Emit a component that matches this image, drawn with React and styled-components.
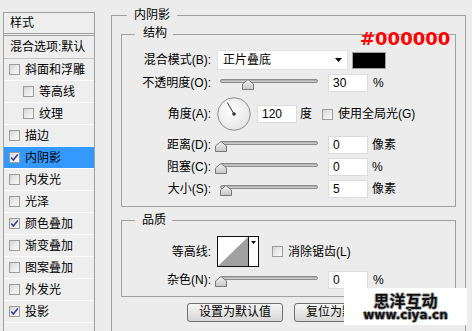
import React from 'react';
import styled, { createGlobalStyle } from 'styled-components';

const Global = createGlobalStyle`
  html, body { margin: 0; padding: 0; background: #ececec; }
  body {
    width: 472px; height: 331px; overflow: hidden;
    font-family: "Liberation Sans", "Noto Sans CJK SC", sans-serif;
    font-size: 12px; line-height: 14px; color: #000;
  }
`;

const Page = styled.div`
  position: relative;
  width: 472px; height: 331px; overflow: hidden;
  box-sizing: border-box;
  padding: 12px 0 0 3px;
  display: flex; align-items: flex-start;
`;

/* ---------- left style list ---------- */
const StylePanel = styled.div`
  flex-shrink: 0;
  width: 92px; height: 340px; box-sizing: border-box;
  border: 1px solid #a0a0a0;
  background: #eeeeee;
`;
const PanelHeader = styled.div`
  height: 20px; line-height: 20px; padding-left: 6px;
  border-bottom: 1px solid #a0a0a0;
`;
const StyleList = styled.div`
  margin-top: 1px;
  border-top: 1px solid #a0a0a0;
`;
const ListRow = styled.div`
  display: flex; align-items: center; gap: 5px;
  height: ${p => (p.$first ? 22 : 21)}px;
  padding-left: ${p => (p.$first ? 6 : p.$indent ? 19 : 5)}px;
  border-bottom: 1px solid ${p => (p.$first ? '#c4c4c4' : '#fbfbfb')};
  background: ${p => (p.$selected ? '#3399ff' : 'transparent')};
  white-space: nowrap;
`;

const BoxWrap = styled.span`
  flex-shrink: 0;
  display: inline-flex; align-items: center; justify-content: center;
  width: 11px; height: 11px; box-sizing: border-box;
  border: 1px solid #9c9c9c;
  background: linear-gradient(135deg, #d6d6d6 0%, #ececec 55%, #fafafa 100%);
  margin-left: ${p => p.$ml || 0}px;
`;
const Check = ({ checked, ml }) => (
  <BoxWrap $ml={ml}>
    {checked && (
      <svg width="9" height="9" viewBox="0 0 9 9">
        <path d="M1.2 4.6 L3.3 7 L7.8 1.5" fill="none" stroke="#2c3d8e" strokeWidth="1.5" />
      </svg>
    )}
  </BoxWrap>
);

/* ---------- right effect panel ---------- */
const Effect = styled.div`
  position: relative;
  flex-shrink: 0;
  margin: 3px 0 0 16px;
  width: 355px; height: 340px; box-sizing: border-box;
  border: 1px solid #a0a0a0; border-bottom: none;
  padding: 18px 9px 0 9px;
  display: flex; flex-direction: column;
`;
const Group = styled.div`
  position: relative;
  margin-top: ${p => p.$mt || 0}px;
  border: 1px solid #a0a0a0;
  padding: 15px 0 ${p => p.$pb}px 0;
  display: flex; flex-direction: column; gap: 4px;
`;
const Legend = styled.span`
  position: absolute;
  top: ${p => p.$top}px; left: ${p => p.$left}px;
  padding: 0 ${p => p.$pr}px 0 ${p => p.$pl}px;
  background: #ececec;
  line-height: 14px; white-space: nowrap;
`;
const Annotation = styled.span`
  position: absolute; top: -5px; left: 238px;
  font-family: "DejaVu Sans", sans-serif; font-weight: bold;
  font-size: 18px; line-height: 18px; color: #ff0000;
`;

const Row = styled.div`
  display: flex; align-items: center;
  height: ${p => p.$h}px;
`;
const Label = styled.span`
  flex-shrink: 0; width: 89px; text-align: right; white-space: nowrap;
`;
const Text = styled.span`
  margin-left: ${p => p.$ml || 0}px; white-space: nowrap;
`;

const Select = styled.div`
  margin-left: 6px;
  width: 131px; height: 20px; box-sizing: border-box;
  background: #fff; border: 1px solid #e2e2e2;
  display: flex; align-items: center;
  padding: 0 5px 0 5px;
`;
const SelectValue = styled.span`flex: 1;`;
const Swatch = styled.div`
  margin-left: 4px;
  width: 34px; height: 17px; box-sizing: border-box;
  border: 1px solid #a0a0a0; background: ${p => p.$color};
`;

const SliderBox = styled.div`
  position: relative; flex-shrink: 0;
  margin-left: 3px; width: 106px; height: 18px;
`;
const Track = styled.div`
  margin: 5px 2px 0 6px; height: 4px; box-sizing: border-box;
  border: 1px solid #8a8a8a; border-radius: 3px;
  background: linear-gradient(#a8a8a8, #d6d6d6);
`;
const Thumb = styled.svg`
  position: absolute; top: 5px;
`;
const Slider = ({ center }) => (
  <SliderBox>
    <Track />
    <Thumb width="12" height="11" viewBox="0 0 12 11" style={{ left: center - 6 - 214 }}>
      <defs>
        <linearGradient id="tg" x1="0" y1="0" x2="0" y2="1">
          <stop offset="0" stopColor="#f4f4f4" />
          <stop offset="1" stopColor="#c6c6c6" />
        </linearGradient>
      </defs>
      <polygon points="6,0.5 11.5,5 11.5,10.5 0.5,10.5 0.5,5" fill="url(#tg)" stroke="#777" />
    </Thumb>
  </SliderBox>
);

const NumBox = styled.div`
  margin-left: ${p => p.$ml}px;
  width: 40px; height: 18px; box-sizing: border-box;
  background: #fff; border: 1px solid #dcdcdc;
  padding-left: 4px; line-height: 16px;
`;

const Dial = styled.svg`margin-left: 6px; flex-shrink: 0;`;

const Contour = styled.div`
  margin-left: 6px;
  width: 42px; height: 31px; box-sizing: border-box;
  border: 1px solid #111; background: #fff;
  display: flex;
`;
const ContourArrow = styled.div`
  width: 9px; border-left: 1px solid #111;
  display: flex; justify-content: center; padding-top: 4px;
`;

const ButtonRow = styled.div`
  margin-top: 6px;
  display: flex; justify-content: center; gap: 11px;
`;
const Button = styled.div`
  width: 96px; height: 19px; box-sizing: border-box;
  border: 1px solid #707070; border-radius: 3px;
  background: linear-gradient(#f6f6f6, #e6e6e6 50%, #d6d6d6);
  text-align: center; line-height: 17px;
`;

const Watermark = styled.div`
  position: absolute; left: 344px; top: 288px;
  width: 123px; height: 37px; box-sizing: border-box;
  background: #fff; padding-top: 3px;
  display: flex; flex-direction: column; align-items: center;
`;
const WmTitle = styled.span`
  font-family: "Noto Sans CJK SC", sans-serif; font-weight: bold;
  font-size: 16px; line-height: 18px; color: #111;
  text-shadow: -1px 0 #aaa, 1px 0 #aaa, 0 -1px #aaa, 0 1px #aaa;
`;
const WmSub = styled.span`
  font-family: "DejaVu Sans", sans-serif; font-weight: bold;
  font-size: 12px; line-height: 13px; color: #111;
  text-shadow: -1px 0 #999, 1px 0 #999, 0 -1px #999, 0 1px #999;
`;

const styleItems = [
  { t: '斜面和浮雕' },
  { t: '等高线', indent: true },
  { t: '纹理', indent: true },
  { t: '描边' },
  { t: '内阴影', checked: true, selected: true },
  { t: '内发光' },
  { t: '光泽' },
  { t: '颜色叠加', checked: true },
  { t: '渐变叠加' },
  { t: '图案叠加' },
  { t: '外发光' },
  { t: '投影', checked: true },
];

const sliders = [
  { label: '距离(D):', value: '0', unit: '像素', center: 221 },
  { label: '阻塞(C):', value: '0', unit: '%', center: 221 },
  { label: '大小(S):', value: '5', unit: '像素', center: 226 },
];

export default function App() {
  const ang = (120 * Math.PI) / 180;
  const lx = 17 + Math.cos(ang) * 13;
  const ly = 17 - Math.sin(ang) * 13;
  return (
    <>
      <Global />
      <Page>
        <StylePanel>
          <PanelHeader>样式</PanelHeader>
          <StyleList>
            <ListRow $first>混合选项:默认</ListRow>
            {styleItems.map(it => (
              <ListRow key={it.t} $indent={it.indent} $selected={it.selected}>
                <Check checked={it.checked} />
                <span>{it.t}</span>
              </ListRow>
            ))}
          </StyleList>
        </StylePanel>

        <Effect>
          <Legend $top={-8} $left={15} $pl={7} $pr={7}>内阴影</Legend>

          <Group $pb={8}>
            <Legend $top={-9} $left={13} $pl={8} $pr={6}>结构</Legend>
            <Annotation>#000000</Annotation>
            <Row $h={20}>
              <Label>混合模式(B):</Label>
              <Select>
                <SelectValue>正片叠底</SelectValue>
                <svg width="7" height="4" viewBox="0 0 7 4"><polygon points="0,0 7,0 3.5,4" fill="#000" /></svg>
              </Select>
              <Swatch $color="#000" />
            </Row>
            <Row $h={18}>
              <Label>不透明度(O):</Label>
              <Slider center={248} />
              <NumBox $ml={8}>30</NumBox>
              <Text $ml={5}>%</Text>
            </Row>
            <Row $h={36}>
              <Label>角度(A):</Label>
              <Dial width="34" height="34" viewBox="0 0 34 34">
                <defs>
                  <radialGradient id="dg" cx="0.4" cy="0.4" r="0.7">
                    <stop offset="0" stopColor="#ffffff" />
                    <stop offset="1" stopColor="#e2e2e2" />
                  </radialGradient>
                </defs>
                <circle cx="17" cy="17" r="16.3" fill="url(#dg)" stroke="#8c8c8c" />
                <line x1="17" y1="17" x2={lx} y2={ly} stroke="#333" strokeWidth="1" />
                <circle cx="17" cy="17" r="1.8" fill="#333" />
              </Dial>
              <NumBox $ml={6}>120</NumBox>
              <Text $ml={3}>度</Text>
              <Check ml={10} />
              <Text $ml={5}>使用全局光(G)</Text>
            </Row>
            {sliders.map(s => (
              <Row $h={18} key={s.label}>
                <Label>{s.label}</Label>
                <Slider center={s.center} />
                <NumBox $ml={8}>{s.value}</NumBox>
                <Text $ml={4}>{s.unit}</Text>
              </Row>
            ))}
          </Group>

          <Group $mt={13} $pb={7}>
            <Legend $top={-8} $left={13} $pl={7} $pr={6}>品质</Legend>
            <Row $h={31}>
              <Label>等高线:</Label>
              <Contour>
                <svg width="30" height="29" viewBox="0 0 30 29">
                  <polygon points="0,29 30,0 30,29" fill="#a0a0a0" />
                </svg>
                <ContourArrow>
                  <svg width="5" height="3" viewBox="0 0 5 3"><polygon points="0,0 5,0 2.5,3" fill="#000" /></svg>
                </ContourArrow>
              </Contour>
              <Check ml={13} />
              <Text $ml={5}>消除锯齿(L)</Text>
            </Row>
            <Row $h={18}>
              <Label>杂色(N):</Label>
              <Slider center={221} />
              <NumBox $ml={8}>0</NumBox>
              <Text $ml={5}>%</Text>
            </Row>
          </Group>

          <ButtonRow>
            <Button>设置为默认值</Button>
            <Button>复位为默认值</Button>
          </ButtonRow>
        </Effect>

        <Watermark>
          <WmTitle>思洋互动</WmTitle>
          <WmSub>www.ciya.cn</WmSub>
        </Watermark>
      </Page>
    </>
  );
}
